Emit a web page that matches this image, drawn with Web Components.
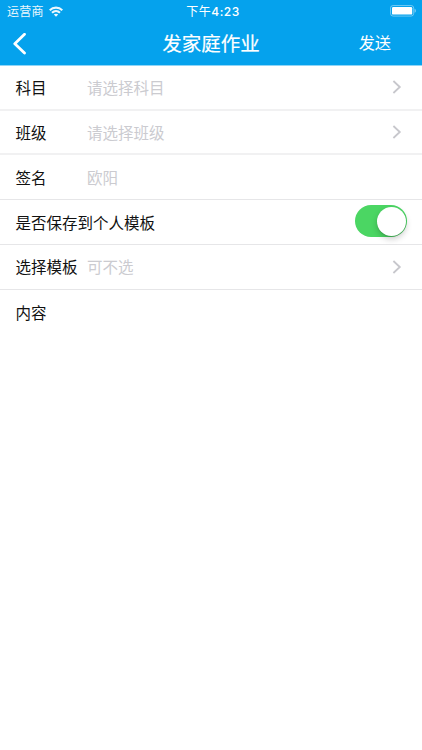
<!DOCTYPE html>
<html lang="zh-CN">
<head>
<meta charset="utf-8">
<title>发家庭作业</title>
<style>
html,body{margin:0;height:100%;background:#fff;overflow:hidden}
body{font-family:Inter,"Noto Sans CJK SC",sans-serif;color:#111}
</style>
</head>
<body>
<homework-screen></homework-screen>
<script>
const define = (name, html) => {
  customElements.define(name, class extends HTMLElement {
    constructor() {
      super();
      this.attachShadow({mode: 'open'}).innerHTML = html;
    }
  });
};

define('status-bar', `
<style>
:host{display:grid;grid-template-columns:1fr auto 1fr;align-items:center;height:22px;padding:0 6px 0 7px;color:#fff;font-size:12px;line-height:22px}
.left{display:flex;align-items:center;gap:5.5px;opacity:.92}
.left svg{margin-top:-1px}
.left span{padding-top:1px;letter-spacing:.2px}
.time{letter-spacing:.5px;padding:1px 0 0 3px}
.time b{font-weight:500}
.battery{justify-self:end;margin-top:-1px}
svg{display:block}
</style>
<div class="left"><span>运营商</span>
<svg width="14" height="11" viewBox="0 0 14 11" fill="none" stroke="#fff" stroke-width="2.1"><path d="M.7 4.3C4.2.7 9.8.7 13.3 4.3M3 6.8c2.3-2.2 5.7-2.2 8 0"/><path d="M7 10.8 4.8 8.6c1.2-1.1 3.2-1.1 4.4 0z" fill="#fff" stroke="none"/></svg></div>
<span class="time">下午<b>4:23</b></span>
<svg class="battery" width="26" height="12" viewBox="0 0 26 12"><rect x=".5" y=".5" width="23.2" height="10.6" rx="2.6" fill="none" stroke="#fff" stroke-opacity=".4"/><rect x="2" y="2" width="20.2" height="7.6" rx="1.2" fill="#fff"/><path d="M24.6 3.8c1.6.6 1.6 3.4 0 4z" fill="#fff" fill-opacity=".5"/></svg>
`);

define('nav-bar', `
<style>
:host{display:grid;grid-template-columns:1fr auto 1fr;align-items:center;height:43px;padding:0 31px 0 13px;color:#fff}
.title{font-size:19.5px;line-height:42px;padding-top:1px;margin-left:18px;-webkit-text-stroke:.2px #fff}
.send{justify-self:end;font-size:16.2px;line-height:43px}
svg{display:block}
</style>
<svg width="14" height="22" viewBox="0 0 14 22" fill="none" stroke="#fff" stroke-width="2.8" stroke-linecap="round" stroke-linejoin="round"><path d="M11.5 1.3 1.8 10.7l9.7 9.4"/></svg>
<span class="title"><slot></slot></span>
<span class="send"><slot name="action"></slot></span>
`);

define('form-row', `
<style>
:host{display:flex;align-items:center;box-sizing:border-box;height:44.8px;padding:0 15px 0 15.5px;border-bottom:1px solid #e6e6e8;font-size:15.5px;line-height:24px;white-space:nowrap}
:host([soft]){border-bottom:2px solid #f1f1f2}
:host([last]){border:0}
.label,.value{padding-top:2.8px}
:host([soft]) :is(.label,.value){padding-top:4.4px}
.label{min-width:71.5px}
.value{flex:1;color:#cbcbd0}
</style>
<span class="label"><slot name="label"></slot></span>
<span class="value"><slot></slot></span>
<slot name="end"></slot>
`);

define('chevron-icon', `
<style>:host{display:block;margin-right:5px}svg{display:block}</style>
<svg width="10" height="14" viewBox="0 0 10 14" fill="none" stroke="#c7c7cc" stroke-width="1.8"><path d="M1.4 1 7.8 7l-6.4 6"/></svg>
`);

define('toggle-switch', `
<style>
:host{display:flex;justify-content:flex-end;box-sizing:border-box;width:52px;height:32px;padding:1.5px;border-radius:16px;background:#4bd663;margin:-2px -.4px 0 0}
i{width:29px;height:29px;border-radius:50%;background:#fff;box-shadow:0 3px 6px rgba(0,0,0,.2),0 1px 1px rgba(0,0,0,.12)}
</style><i></i>
`);

define('homework-screen', `
<style>
:host{display:block;height:100vh;background:#fff}
header{background:#05a2ed;height:65px;border-bottom:1px solid #8fd5f7}
main{margin-top:-.2px}
</style>
<header><status-bar></status-bar><nav-bar>发家庭作业<span slot="action">发送</span></nav-bar></header>
<main>
<form-row soft><span slot="label">科目</span>请选择科目<chevron-icon slot="end"></chevron-icon></form-row>
<form-row soft><span slot="label">班级</span>请选择班级<chevron-icon slot="end"></chevron-icon></form-row>
<form-row><span slot="label">签名</span>欧阳</form-row>
<form-row><span slot="label">是否保存到个人模板</span><toggle-switch slot="end"></toggle-switch></form-row>
<form-row><span slot="label">选择模板</span>可不选<chevron-icon slot="end"></chevron-icon></form-row>
<form-row last><span slot="label">内容</span></form-row>
</main>
`);
</script>
</body>
</html>
